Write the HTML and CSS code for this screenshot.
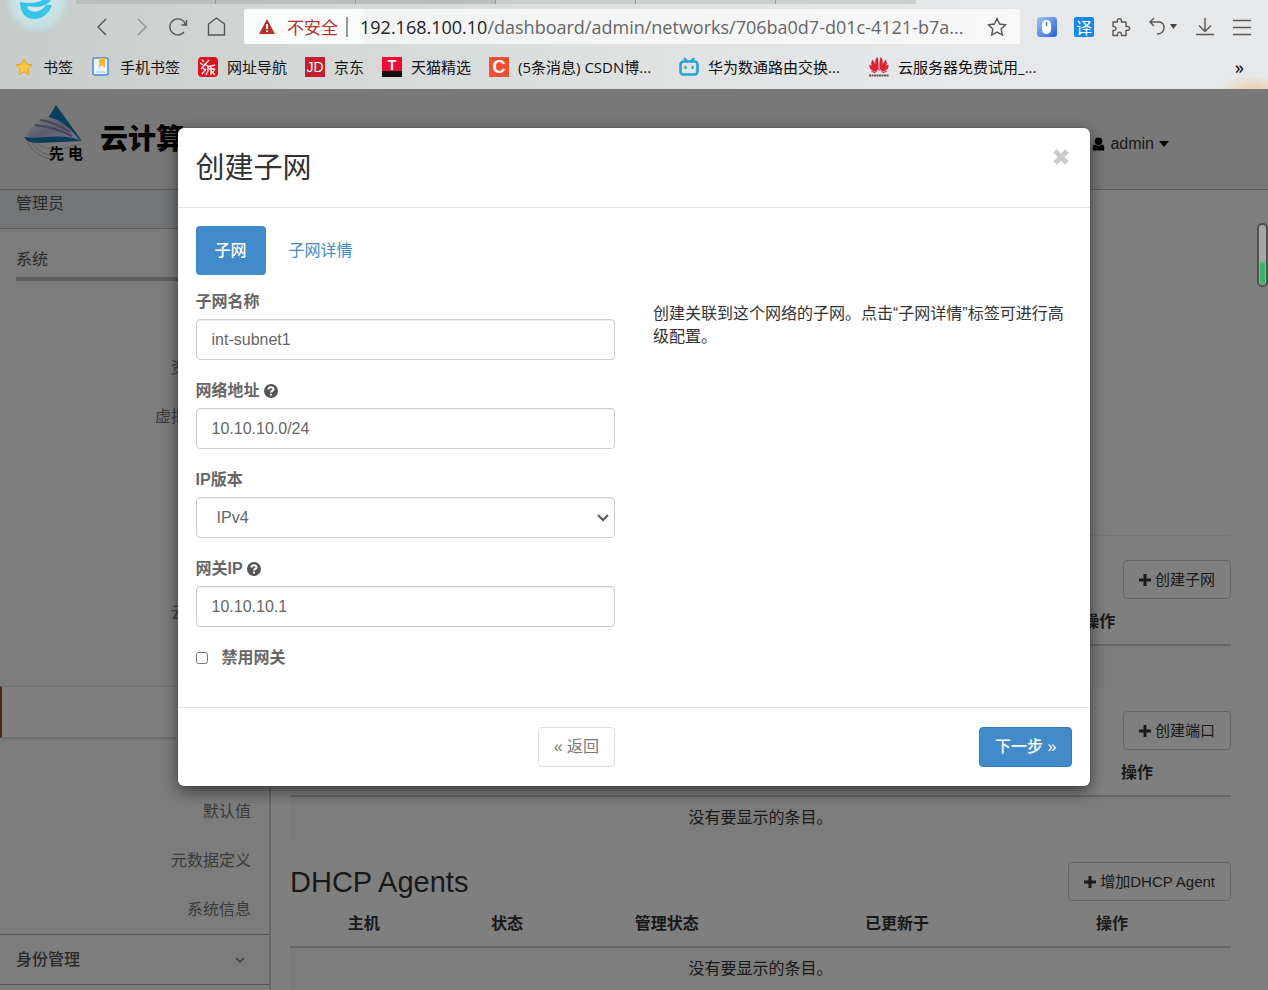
FILE: index.html
```html
<!DOCTYPE html>
<html lang="zh-CN">
<head>
<meta charset="utf-8">
<title>创建子网</title>
<link rel="stylesheet" href="styles.css">
</head>
<body>
<header class="browser">
  <div class="tabstrip"><span></span><span></span><span></span><span></span><span></span><span></span></div>
  <svg class="browser-logo" width="68" height="34" viewBox="0 0 68 34" aria-hidden="true">
    <defs><radialGradient id="orb"><stop offset="0" stop-color="#dcebec"/><stop offset=".8" stop-color="#c6dfe1"/><stop offset="1" stop-color="#bcd6d9" stop-opacity=".3"/></radialGradient></defs>
    <circle cx="33" cy="1" r="32" fill="url(#orb)"/>
    <path d="M16 2C16 14 23 20 32 19C40 18 46 12 48 5L42 5C38 11 32 13 27 11C24 10 23 8 24 6C34 9 44 5 47 0H39C33 3 24 4 16 2Z" fill="#35c5ea"/>
  </svg>
  <div class="toolbar">
    <nav class="nav-buttons">
      <button type="button" aria-label="后退"><svg width="20" height="20" viewBox="0 0 20 20"><path d="M14 2L6 10L14 18"/></svg></button>
      <button type="button" aria-label="前进" class="muted"><svg width="20" height="20" viewBox="0 0 20 20"><path d="M8 2L16 10L8 18"/></svg></button>
      <button type="button" aria-label="刷新"><svg width="20" height="20" viewBox="0 0 20 20"><path d="M17.500 7.500A8 8 0 1 0 16 15M18.500 3V8H13.500"/></svg></button>
      <button type="button" aria-label="主页"><svg width="20" height="20" viewBox="0 0 20 20"><path d="M2.500 7L10.500 1L18.500 7V18H2.500Z"/></svg></button>
    </nav>
    <div class="address">
      <svg width="16" height="15" viewBox="0 0 16 15" aria-hidden="true"><path d="M8 0L16 15H0Z" fill="#b92e2a"/><path d="M8 5V10M8 11.500V13" stroke="#fff" stroke-width="2"/></svg>
      <span class="insecure">不安全</span>
      <span class="divider"></span>
      <span class="url"><b>192.168.100.10</b>/dashboard/admin/networks/706ba0d7-d01c-4121-b7a...</span>
      <button type="button" aria-label="收藏"><svg width="20" height="20" viewBox="0 0 20 20"><path d="M10 1.500L12.600 7L18.500 7.800L14.200 12L15.300 18L10 15.100L4.700 18L5.800 12L1.500 7.800L7.400 7Z"/></svg></button>
    </div>
    <div class="tools">
      <button type="button" aria-label="鼠标手势"><svg width="20" height="20" viewBox="0 0 20 20"><defs><linearGradient id="ms" x2="1" y2="1"><stop stop-color="#9dc1fa"/><stop offset="1" stop-color="#2865dc"/></linearGradient></defs><rect width="20" height="20" rx="3" fill="url(#ms)" stroke="none"/><rect x="5" y="3" width="9" height="14" rx="4.500" fill="#fff" stroke="none"/><path d="M9.500 5V9" stroke="#3b75e2" stroke-width="1.500"/></svg></button>
      <button type="button" class="translate">译</button>
      <button type="button" aria-label="扩展"><svg width="20" height="20" viewBox="0 0 20 20"><path d="M2 5H6.500C5 1 11 0 10.500 5H15V9.500C20 8.500 20 14 15 13.500V18.500H10.500C11 14 6 14 6.500 18.500H2V13.500C6 14 6 9 2 9.500Z" stroke-linejoin="round"/></svg></button>
      <button type="button" aria-label="撤销"><svg width="30" height="20" viewBox="0 0 30 20"><path d="M6 1L2 5L6 9M2 5H11C18 5 18 17 9 17"/><path d="M22 7H29L25.500 12Z" fill="#444" stroke="none"/></svg></button>
      <button type="button" aria-label="下载"><svg width="20" height="20" viewBox="0 0 20 20"><path d="M10 1V14M4 8.500L10 14.500L16 8.500M1 17.500H19"/></svg></button>
      <button type="button" aria-label="菜单"><svg width="20" height="20" viewBox="0 0 20 20"><path d="M1 3.500H19M1 10.500H19M1 17.500H19"/></svg></button>
    </div>
  </div>
  <nav class="bookmarks">
    <a href="#"><svg width="20" height="20" viewBox="0 0 20 20"><path d="M10 2L12.600 7L18 7.800L14.200 12L15 17.500L10 15L5 17.500L5.800 12L2 7.800L7.400 7Z" fill="#fdc345" stroke="#eda02f" stroke-linejoin="round"/></svg>书签</a>
    <a href="#"><svg width="20" height="20" viewBox="0 0 20 20"><rect x="2" y="1" width="15" height="17" rx="2" fill="#eef5ff" stroke="#418ce4" stroke-width="1.500"/><path d="M8 1H14V11L11 8L8 11Z" fill="#fbb52c"/><path d="M5 15H14" stroke="#9dc4f5"/></svg>手机书签</a>
    <a href="#"><svg width="20" height="20" viewBox="0 0 20 20"><rect width="20" height="20" rx="4" fill="#e0101c"/><path d="M4 3L6 5M2 6L5 8M3 12L11 3M6 7L10 9M5 11L7 13M4 17L8 12M9 10L17 8M10 10V14L8 18M11 12H17M13 10V18M13 14L17 18M17 12L15 15" stroke="#fff" fill="none" stroke-width="1.300"/></svg>网址导航</a>
    <a href="#"><span class="site jd">JD</span>京东</a>
    <a href="#"><span class="site tmall">T</span>天猫精选</a>
    <a href="#" class="wide"><span class="site csdn">C</span>(5条消息) CSDN博...</a>
    <a href="#" class="wide"><svg width="20" height="20" viewBox="0 0 20 20"><path d="M5 1L8 4M15 1L12 4" stroke="#20a5d6" stroke-width="2"/><rect x="1.500" y="4.500" width="17" height="13" rx="3" fill="none" stroke="#20a5d6" stroke-width="2.600"/><path d="M6.500 9V12M13.500 9V12" stroke="#20a5d6" stroke-width="2"/></svg>华为数通路由交换...</a>
    <a href="#"><svg width="20" height="20" viewBox="0 0 20 20"><g fill="#dc2233"><path d="M9.500 14C5 9 5.500 2 8.500 0Q10 5 9.500 14ZM10.500 14C15 9 14.500 2 11.500 0Q10 5 10.500 14ZM8.500 14C2 11 1 6 3.500 2.500Q7 7 8.500 14ZM11.500 14C18 11 19 6 16.500 2.500Q13 7 11.500 14ZM8 15C2 14 0 11 .5 7.500Q6 10 8 15ZM12 15C18 14 20 11 19.500 7.500Q14 10 12 15ZM7.500 15.500Q4 17 1.500 13.500ZM12.500 15.500Q16 17 18.500 13.500Z"/></g><path d="M0 18.500H20" stroke="#5c5858" stroke-width="2" stroke-dasharray="2 .5"/></svg>云服务器免费试用_...</a>
    <button type="button" class="more">»</button>
  </nav>
</header>

<div class="viewport">
  <div class="page">
    <header class="topbar">
      <div class="brand">
        <svg width="66" height="62" viewBox="0 0 66 62" aria-hidden="true">
          <defs><linearGradient id="sail" x2="1" y2="1"><stop stop-color="#fff"/><stop offset=".5" stop-color="#b9b9e0"/><stop offset="1" stop-color="#f4f4ff"/></linearGradient></defs>
          <path d="M34 3L60 39L25 18Z" fill="#167ab8"/>
          <path d="M23 14C11 22 6 29 4 36L58 39C49 26 38 17 23 14Z" fill="url(#sail)"/>
          <path d="M18 18Q33 20 48 30M13 23Q32 25 50 34" fill="none" stroke="#8b8bb4" stroke-width="2"/>
          <path d="M2 35C18 38 40 30 60 39L16 41C7 41 4 38 2 35Z" fill="#167ab8"/>
          <path d="M5 39C11 50 19 55 28 57M10 41C18 51 25 53 34 55M15 42C24 48 44 49 56 42" fill="none" stroke="#bbb" stroke-width="1"/>
          <text class="brand-mark" x="27" y="57">先</text><text class="brand-mark" x="46" y="57">电</text>
        </svg>
        <span class="brand-name">云计算</span>
      </div>
      <a href="#" class="user"><svg width="13" height="14" viewBox="0 0 14 14" aria-hidden="true"><circle cx="7" cy="4" r="4"/><path d="M3 7.500Q7 10 11 7.500Q14 8 13 14H1Q0 8 3 7.500Z"/></svg>admin<svg width="10" height="6" viewBox="0 0 10 6" aria-hidden="true"><path d="M0 0H10L5 6Z"/></svg></a>
    </header>
    <div class="columns">
      <aside class="sidebar">
        <a href="#" class="side-head">管理员</a>
        <div class="side-group">系统</div>
        <ul class="side-list">
          <li></li>
          <li><a href="#">资源使用量</a></li>
          <li><a href="#">虚拟机管理器</a></li>
          <li></li>
          <li></li>
          <li></li>
          <li><a href="#">云主机类型</a></li>
          <li></li>
          <li class="active"></li>
          <li></li>
          <li><a href="#">默认值</a></li>
          <li><a href="#">元数据定义</a></li>
          <li><a href="#">系统信息</a></li>
        </ul>
        <a href="#" class="side-foot">身份管理<svg width="10" height="6" viewBox="0 0 10 6" aria-hidden="true"><path d="M1 1L5 5L9 1" fill="none" stroke="#777" stroke-width="1.500"/></svg></a>
      </aside>
      <main class="content">
        <div class="overview"></div>
        <section class="panel">
          <div class="panel-head"><button type="button" class="btn"><svg width="12" height="12" viewBox="0 0 12 12"><path d="M6 0V12M0 6H12"/></svg>创建子网</button></div>
          <table class="subnets"><thead><tr><th class="lead"></th><th>操作</th></tr></thead><tbody><tr><td colspan="2"></td></tr></tbody></table>
        </section>
        <section class="panel">
          <div class="panel-head"><button type="button" class="btn"><svg width="12" height="12" viewBox="0 0 12 12"><path d="M6 0V12M0 6H12"/></svg>创建端口</button></div>
          <table class="ports"><thead><tr><th class="lead"></th><th>操作</th></tr></thead><tbody><tr><td colspan="2">没有要显示的条目。</td></tr></tbody></table>
        </section>
        <section class="panel">
          <div class="panel-head"><h3>DHCP Agents</h3><button type="button" class="btn"><svg width="12" height="12" viewBox="0 0 12 12"><path d="M6 0V12M0 6H12"/></svg>增加DHCP Agent</button></div>
          <table class="agents"><thead><tr><th>主机</th><th>状态</th><th>管理状态</th><th>已更新于</th><th>操作</th></tr></thead><tbody><tr><td colspan="5">没有要显示的条目。</td></tr></tbody></table>
        </section>
      </main>
    </div>
  </div>

  <div class="backdrop">
    <form class="modal" role="dialog" aria-labelledby="dlg-title">
      <div class="modal-head">
        <h2 id="dlg-title">创建子网</h2>
        <button type="button" class="close" aria-label="关闭"><svg width="18" height="18" viewBox="0 0 18 18"><path d="M3 3L15 15M15 3L3 15"/></svg></button>
      </div>
      <div class="modal-body">
        <nav class="pills"><a href="#" class="on">子网</a><a href="#">子网详情</a></nav>
        <div class="form-grid">
          <div class="fields">
            <div class="field"><label for="name">子网名称</label><input id="name" type="text" value="int-subnet1"></div>
            <div class="field"><label for="cidr">网络地址 <svg class="help" width="14" height="14" viewBox="0 0 14 14" aria-hidden="true"><circle cx="7" cy="7" r="7"/><path d="M4.500 5.500C4.500 2.500 9.500 2.500 9.500 5.300C9.500 7 7 6.800 7 8.500M7 9.700V11.500"/></svg></label><input id="cidr" type="text" value="10.10.10.0/24"></div>
            <div class="field"><label for="ver">IP版本</label><div class="select"><select id="ver"><option>IPv4</option></select><svg width="12" height="8" viewBox="0 0 12 8" aria-hidden="true"><path d="M1 1L6 6L11 1" fill="none" stroke="#555" stroke-width="2"/></svg></div></div>
            <div class="field"><label for="gw">网关IP <svg class="help" width="14" height="14" viewBox="0 0 14 14" aria-hidden="true"><circle cx="7" cy="7" r="7"/><path d="M4.500 5.500C4.500 2.500 9.500 2.500 9.500 5.300C9.500 7 7 6.800 7 8.500M7 9.700V11.500"/></svg></label><input id="gw" type="text" value="10.10.10.1"></div>
            <label class="check"><input type="checkbox">禁用网关</label>
          </div>
          <p class="hint">创建关联到这个网络的子网。点击“子网详情”标签可进行高级配置。</p>
        </div>
      </div>
      <div class="modal-foot">
        <div><button type="button" class="back">« 返回</button></div>
        <div><button type="button" class="next">下一步 »</button></div>
      </div>
    </form>
  </div>
  <div class="gauge"><span></span></div>
</div>
</body>
</html>
```
FILE: styles.css
```css
* { box-sizing: border-box; }

body {
  margin: 0;
  height: 100vh;
  display: flex;
  flex-direction: column;
  overflow: hidden;
  font: 16px/24px "Liberation Sans", "Noto Sans CJK SC", sans-serif;
  color: #333;
}

a { color: inherit; text-decoration: none; }
button { font: inherit; cursor: pointer; }
h2, h3, p, ul { margin: 0; padding: 0; font-weight: 400; }
ul { list-style: none; }

/* Browser frame */
.browser {
  position: relative;
  flex: none;
  height: 89px;
  background: linear-gradient(100deg, #c7cccb 0, #d3d8d7 25%, #dfe1e1 50%, #e7e8ea 75%);
}
.browser::after {
  content: "";
  position: absolute;
  right: 0;
  bottom: 0;
  width: 56px;
  height: 16px;
  background: radial-gradient(ellipse at 75% 100%, #ecd0ac, transparent 60%);
}
.browser-logo { position: absolute; left: 4px; top: 0; }
.tabstrip { display: flex; height: 4px; padding-left: 76px; }
.tabstrip span { flex: 0 0 140px; background: #b9bfbe; border-right: 1px solid #929797; }
.tabstrip span:nth-child(n+4) { background: #cccece; }
.tabstrip span:last-child { border: 0; }
.toolbar { display: flex; align-items: center; height: 45px; padding: 0 16px 0 92px; }
.toolbar button {
  display: flex;
  border: 0;
  padding: 0;
  background: none;
}
.toolbar button svg { fill: none; stroke: #555; stroke-width: 1.4px; }
.nav-buttons { display: flex; gap: 18px; margin-right: 18px; }
.nav-buttons .muted { opacity: .5; }
.address {
  flex: 1;
  min-width: 0;
  display: flex;
  align-items: center;
  height: 35px;
  padding: 0 13px 0 15px;
  border-radius: 2px;
  background: linear-gradient(90deg, #fafbfb 0 15%, #f2f3f3 16%, #f8f8f9);
}
.insecure { margin: 0 8px 0 12px; font: 17px/24px "Noto Sans CJK SC", sans-serif; color: #b5302c; }
.divider { width: 2px; height: 20px; margin-right: 12px; background: #999; }
.url {
  flex: 1;
  white-space: nowrap;
  font: 18px/28px "Open Sans", sans-serif;
  color: #666;
}
.url b { font-weight: 400; color: #222; }
.tools { display: flex; gap: 17px; margin-left: 17px; }
.toolbar .translate {
  width: 20px;
  height: 20px;
  justify-content: center;
  border-radius: 2px;
  background: #1688f0;
  color: #fff;
  font: 16px/20px "Noto Sans CJK SC", sans-serif;
}
.bookmarks {
  display: flex;
  align-items: center;
  gap: 18px;
  height: 36px;
  padding: 0 24px 0 14px;
  font: 15px/24px "Open Sans", "Noto Sans CJK SC", sans-serif;
  color: #111;
  white-space: nowrap;
}
.bookmarks a { display: flex; align-items: center; gap: 9px; }
.bookmarks .wide { width: 172px; }
.bookmarks .more { margin-left: auto; border: 0; padding: 0; background: none; font-size: 18px; }
.site { width: 20px; height: 20px; color: #fff; text-align: center; font: 14px/20px "Liberation Sans", sans-serif; }
.jd { background: #c41e2c; }
.tmall { background: linear-gradient(#f00a32 14px, #111 14px); font-weight: 700; line-height: 16px; }
.csdn { background: #f04f30; font-size: 18px; font-weight: 700; }

/* Dashboard */
.viewport { position: relative; flex: 1; min-height: 0; overflow: hidden; background: #fff; }
.page { min-height: 100%; }
.topbar {
  display: flex;
  align-items: center;
  justify-content: space-between;
  height: 101px;
  padding: 0 99px 0 22px;
  border-bottom: 1px solid #bbb;
  background: #f0f0f0;
}
.brand { display: flex; align-items: center; gap: 12px; padding-bottom: 12px; }
.brand-mark { font: bold 15px "Noto Sans CJK SC", sans-serif; }
.brand-name { padding-top: 8px; font: 900 28px/40px "Noto Sans CJK SC", sans-serif; color: #000; }
.user { display: flex; align-items: center; gap: 5px; padding-top: 9px; }
.columns { display: flex; align-items: stretch; }
.sidebar {
  flex: 0 0 271px;
  border-right: 2px solid #ccc;
  background: #f8f8f8;
  color: #777;
}
.side-head {
  display: flex;
  height: 39px;
  padding: 2px 16px;
  border-bottom: 1px solid #bbb;
  background: #e6eaee;
  color: #555;
}
.side-group {
  height: 52px;
  margin-left: 16px;
  padding-top: 19px;
  border-bottom: 4px solid #bbb;
  color: #555;
}
.side-list { padding: 13px 0 0; }
.side-list li { height: 49px; padding: 13px 18px 0; text-align: right; }
.side-list .active {
  height: 52px;
  border: 1px solid #ddd;
  border-left: 2px solid #a94442;
  border-right: 0;
  background: #fff;
  box-shadow: 0 1px 2px #ddd;
}
.side-foot {
  display: flex;
  align-items: center;
  justify-content: space-between;
  height: 51px;
  padding: 0 24px 0 16px;
  border: solid #aaa;
  border-width: 1px 0;
  font-weight: 500;
  color: #555;
}
.content { flex: 1; padding: 0 37px 0 19px; }
.overview { height: 346px; margin-bottom: 24px; border-bottom: 1px solid #eee; }
.panel { margin-bottom: 23px; }
.panel-head { display: flex; justify-content: flex-end; align-items: center; height: 39px; }
.panel-head h3 { margin-right: auto; font-size: 29px; line-height: 36px; }
.btn {
  display: flex;
  align-items: center;
  gap: 4px;
  height: 39px;
  padding: 0 15px;
  border: 1px solid #ccc;
  border-radius: 4px;
  background: none;
  color: #333;
  font-size: 15px;
}
.btn svg { stroke: #333; stroke-width: 3px; }
table { width: 100%; table-layout: fixed; border-collapse: collapse; }
th { height: 46px; padding: 1px 0 0; border-bottom: 2px solid #ccc; font-weight: 700; }
td { height: 43px; padding: 0; background: #f9f9f9; text-align: center; }
.subnets .lead { width: 72%; }
.ports .lead { width: 80%; }
.agents th:nth-child(1) { width: 15.7%; }
.agents th:nth-child(2) { width: 14.7%; }
.agents th:nth-child(3) { width: 19.3%; }
.agents th:nth-child(4) { width: 29.6%; }
.agents th:nth-child(5) { padding-right: 43px; }

/* Dialog */
.backdrop {
  position: absolute;
  inset: 0;
  display: flex;
  justify-content: center;
  align-items: flex-start;
  padding-top: 39px;
  background: rgba(0, 0, 0, .5);
}
.modal {
  width: 72%;
  border-radius: 6px;
  background: #fff;
  box-shadow: 0 5px 16px rgba(0, 0, 0, .55), 0 0 1px #222;
  color: #666;
}
.modal-head {
  display: flex;
  justify-content: space-between;
  align-items: flex-start;
  height: 80px;
  padding: 20px 20px 0 18px;
  border-bottom: 1px solid #e2e2e2;
}
.modal-head h2 { font-size: 29px; line-height: 40px; color: #333; }
.close { display: flex; border: 0; padding: 0; background: none; }
.close svg { stroke: #ccc; stroke-width: 5px; }
.modal-body { padding: 18px 18px 37px; }
.pills { display: flex; gap: 4px; }
.pills a { padding: 13px 19px 12px; border-radius: 4px; color: #428bca; }
.pills .on { background: #428bca; color: #fff; font-weight: 500; }
.form-grid { display: grid; grid-template-columns: 1fr 1fr; column-gap: 38px; }
.fields { padding-top: 15px; }
.field { margin-bottom: 19px; }
.field label, .check { display: block; font-weight: 700; color: #666; }
.field label { height: 24px; margin-bottom: 5px; }
.help { vertical-align: -2px; fill: #555; }
.help path { fill: none; stroke: #fff; stroke-width: 2px; }
.field input, .select select {
  display: block;
  width: 100%;
  height: 41px;
  padding: 0 15px;
  border: 1px solid #ccc;
  border-radius: 4px;
  background: #fff;
  box-shadow: inset 0 1px 1px rgba(0, 0, 0, .075);
  font: inherit;
  color: #666;
}
.select { position: relative; }
.select select { appearance: none; padding-left: 20px; }
.select svg { position: absolute; right: 6px; top: 17px; pointer-events: none; }
.field label + input, .select { margin-top: 0; }
.check { display: flex; align-items: center; gap: 14px; }
.check input { width: 12px; height: 12px; margin: 0; }
.hint { padding-top: 27px; line-height: 23px; color: #333; }
.modal-foot {
  display: grid;
  grid-template-columns: 1fr 1fr;
  column-gap: 38px;
  padding: 19px 18px;
  border-top: 1px solid #e2e2e2;
  text-align: right;
}
.back, .next { height: 40px; padding: 0 15px; border: 1px solid #ddd; border-radius: 4px; background: #fff; color: #777; }
.next { border-color: #357ebd; background: #428bca; color: #fff; font-weight: 500; }

.gauge {
  position: absolute;
  right: 0;
  top: 134px;
  width: 11px;
  height: 64px;
  display: flex;
  align-items: flex-end;
  padding: 1px;
  border: 2px solid #505050;
  border-radius: 5px;
  background: #a6a6a6;
}
.gauge span { flex: 1; height: 22px; border-radius: 2px; background: #35b865; }
```
